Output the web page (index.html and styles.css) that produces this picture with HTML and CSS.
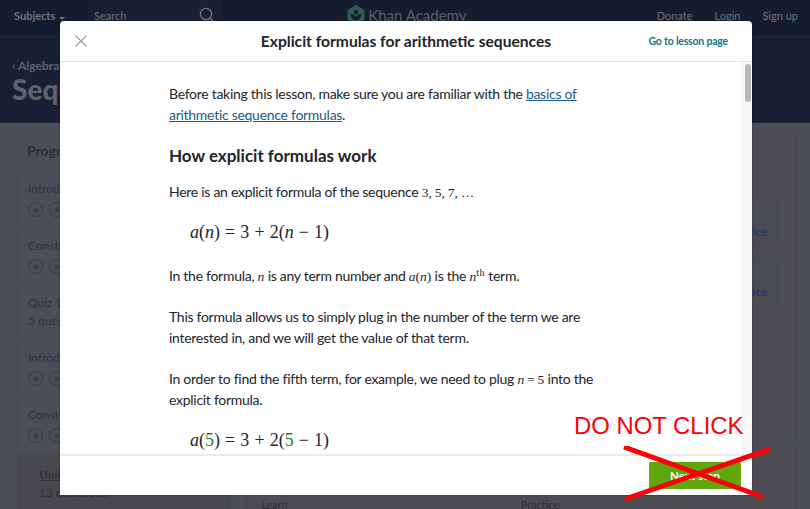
FILE: index.html
```html
<!DOCTYPE html>
<html lang="en">
<head>
    <meta charset="UTF-8">
    <title>Explicit formulas for arithmetic sequences</title>
    <link rel="stylesheet" href="styles.css">
</head>
<body>
<div class="page">
    <header class="topbar">
        <div class="topbar-left">
            <span class="subjects">Subjects <i class="caret"></i></span>
            <div class="search">
                <span>Search</span>
                <svg width="16" height="16" viewBox="0 0 16 16" fill="none" stroke="#6b7280" stroke-width="1.4"><circle cx="7" cy="7" r="5.6"/><path d="M11 11l4 4"/></svg>
            </div>
        </div>
        <div class="logo">
            <svg width="18" height="20" viewBox="0 0 18 20"><path d="M9 0l8.5 5v10L9 20 .5 15V5z" fill="#2f5f4c"/><circle cx="9" cy="7" r="2.2" fill="#141c2f"/><path d="M3.5 9c0 4 2.5 6 5.5 6s5.500-2 5.500-6c-2.500 0-4.500 1-5.500 3-1-2-3-3-5.500-3z" fill="#141c2f"/></svg>
            <span>Khan Academy</span>
        </div>
        <nav class="topbar-right">
            <span>Donate</span>
            <span>Login</span>
            <span>Sign up</span>
        </nav>
    </header>
    <section class="hero">
        <div class="crumb">&lsaquo; Algebra I</div>
        <h1>Sequences</h1>
    </section>
    <main class="content">
        <aside class="sidebar">
            <h3>Progress</h3>
            <div class="lessons">
                <div class="lesson">
                    <div class="lesson-name">Introduction</div>
                    <div class="stars"><i>&#9733;</i><i>&#9733;</i></div>
                </div>
                <div class="lesson">
                    <div class="lesson-name">Constructing</div>
                    <div class="stars"><i>&#9733;</i><i>&#9733;</i></div>
                </div>
                <div class="lesson lesson-quiz">
                    <div class="lesson-name">Quiz 1</div>
                    <div class="lesson-sub">5 questions</div>
                </div>
                <div class="lesson">
                    <div class="lesson-name">Introduction</div>
                    <div class="stars"><i>&#9733;</i><i>&#9733;</i></div>
                </div>
                <div class="lesson">
                    <div class="lesson-name">Constructing</div>
                    <div class="stars"><i>&#9733;</i><i>&#9733;</i></div>
                </div>
                <div class="lesson lesson-test">
                    <div class="lesson-name">Unit test</div>
                    <div class="lesson-sub">13 questions</div>
                </div>
            </div>
        </aside>
        <div class="panels">
            <div class="panel panel-top">
                <div class="practice">Practice</div>
                <div class="practice">Practice</div>
            </div>
            <div class="panel panel-bottom">
                <span>Learn</span>
                <span>Practice</span>
            </div>
        </div>
    </main>
</div>

<div class="modal">
    <div class="modal-head">
        <svg class="close" width="12" height="12" viewBox="0 0 12 12" stroke="#9a9ea3" stroke-width="1.1"><path d="M.5.5l11 11M11.500.5l-11 11"/></svg>
        <h2>Explicit formulas for arithmetic sequences</h2>
        <a class="lesson-link">Go to lesson page</a>
    </div>
    <div class="modal-body">
        <div class="article">
            <p>Before taking this lesson, make sure you are familiar with the <a>basics of arithmetic sequence formulas</a>.</p>
            <h3>How explicit formulas work</h3>
            <p>Here is an explicit formula of the sequence <span class="m">3, 5, 7, &hellip;</span></p>
            <div class="formula"><em>a</em>(<em>n</em>) = 3 + 2(<em>n</em> &minus; 1)</div>
            <p>In the formula, <span class="m"><em>n</em></span> is any term number and <span class="m"><em>a</em>(<em>n</em>)</span> is the <span class="m"><em>n</em><sup>th</sup></span> term.</p>
            <p>This formula allows us to simply plug in the number of the term we are interested in, and we will get the value of that term.</p>
            <p>In order to find the fifth term, for example, we need to plug <span class="m"><em>n</em> = 5</span> into the explicit formula.</p>
            <div class="formula"><em>a</em>(<b>5</b>) = 3 + 2(<b>5</b> &minus; 1)</div>
        </div>
        <div class="scrollbar"><div class="thumb"></div></div>
    </div>
    <div class="modal-foot">
        <button class="next">Next step</button>
    </div>
</div>

<div class="warning">DO NOT CLICK</div>
<svg class="cross" width="150" height="56" viewBox="0 0 150 56" stroke="#fb0007" stroke-width="5"><path d="M1 1l139 50M147 3L2 53"/></svg>
</body>
</html>
```

FILE: styles.css
```css
* {
    box-sizing: border-box;
}
html, body {
    margin: 0;
    height: 100%;
    overflow: hidden;
}
body {
    font-family: Lato, "Open Sans", sans-serif;
    background-color: #4b4e56;
    position: relative;
}
.page {
    width: 810px;
    height: 509px;
    overflow: hidden;
}

/* dimmed page behind the modal */
.topbar {
    height: 37px;
    background-color: #141c2f;
    border-bottom: 1px solid #1f2739;
    display: flex;
    align-items: center;
    justify-content: space-between;
    padding: 0 12px 6px 14px;
    font-size: 11px;
    color: #6f7480;
    font-weight: 700;
}
.topbar-left {
    display: flex;
    align-items: center;
    gap: 14px;
}
.subjects {
    width: 59px;
    white-space: nowrap;
}
.caret {
    display: inline-block;
    margin-left: 1px;
    border-left: 3px solid transparent;
    border-right: 3px solid transparent;
    border-top: 3px solid #6f7480;
}
.search {
    width: 135px;
    height: 30px;
    background-color: #182033;
    display: flex;
    align-items: center;
    justify-content: space-between;
    padding: 0 7px;
    font-weight: 400;
}
.logo {
    display: flex;
    align-items: center;
    gap: 3px;
    margin-left: -65px;
    font-size: 15px;
    font-weight: 400;
    color: #5c616c;
}
.topbar-right {
    display: flex;
    gap: 22px;
    font-weight: 400;
}
.hero {
    height: 86px;
    background-color: #172034;
    padding: 22px 12px 0;
    color: #5d626d;
}
.crumb {
    font-size: 12px;
    font-weight: 700;
    line-height: 14px;
}
.hero h1 {
    margin: 0;
    font-size: 28px;
    line-height: 32px;
    font-weight: 900;
}
.content {
    display: flex;
    padding: 9px 13px 0 17px;
    gap: 14px;
}
.sidebar {
    width: 214px;
    flex: none;
}
.sidebar h3 {
    margin: 0;
    padding: 10px 10px 0;
    height: 38px;
    font-size: 14px;
    line-height: 18px;
    color: #2c2f36;
}
.lessons {
    border: 1px solid #45484f;
    border-bottom: 0;
}
.lesson {
    height: 57px;
    padding: 9px 10px 0;
    border-bottom: 1px solid #45484f;
    font-size: 12px;
    line-height: 18px;
    color: #2f3238;
}
.lesson-quiz {
    height: 55px;
}
.lesson-sub {
    line-height: 17px;
}
.stars {
    display: flex;
    gap: 6px;
    margin-top: 4px;
}
.stars i {
    width: 15px;
    height: 15px;
    border: 1px solid #36393f;
    border-radius: 50%;
    font-style: normal;
    font-size: 9px;
    line-height: 13px;
    text-align: center;
    color: #36393f;
}
.lesson-test {
    background-color: #48494f;
    padding: 11px 0 0 21px;
    height: 60px;
    border-top: 1px solid #45484f;
}
.lesson-test .lesson-name {
    font-weight: 700;
    text-decoration: underline;
}
.panels {
    flex: 1;
}
.panel {
    border: 1px solid #45484f;
    background-color: #4d4d51;
}
.panel-top {
    height: 307px;
    padding: 65px 17px 0 280px;
}
.practice {
    height: 48px;
    margin-bottom: 12px;
    background-color: #4a4c54;
    border: 1px solid #46484f;
    color: #2a3569;
    font-size: 12px;
    font-weight: 700;
    line-height: 66px;
    text-indent: 197px;
    overflow: hidden;
}
.panel-bottom {
    height: 70px;
    margin-top: 9px;
    padding: 49px 0 0 15px;
    display: flex;
    gap: 233px;
    font-size: 11px;
    color: #2c2f36;
}

/* modal */
.modal {
    position: absolute;
    left: 60px;
    top: 21px;
    width: 692px;
    height: 474px;
    background-color: #fff;
    border-radius: 4px 4px 0 0;
    display: flex;
    flex-direction: column;
    box-shadow: 0 0 2px rgba(0,0,0,0.4);
}
.modal-head {
    height: 41px;
    flex: none;
    border-bottom: 1px solid #dfe0e1;
    display: flex;
    align-items: center;
    justify-content: space-between;
    padding: 0 24px 0 15px;
    position: relative;
}
.modal-head h2 {
    position: absolute;
    left: 0;
    right: 0;
    margin: 0;
    text-align: center;
    font-size: 15.600px;
    font-weight: 700;
    color: #21242c;
}
.lesson-link {
    font-size: 10.500px;
    font-weight: 700;
    letter-spacing: -0.2px;
    color: #14718f;
    position: relative;
}
.modal-body {
    flex: 1;
    min-height: 0;
    display: flex;
    overflow: hidden;
}
.article {
    flex: 1;
    padding: 21px 0 0 109px;
    font-size: 14px;
    letter-spacing: -0.28px;
    line-height: 21px;
    color: #21242c;
}
.article p {
    width: 430px;
    margin: 0 0 20px;
}
.article a {
    color: #1c5b8a;
    text-decoration: underline;
}
.article h3 {
    margin: -1px 0 13px;
    font-size: 17px;
    letter-spacing: 0;
    line-height: 24px;
    font-weight: 700;
}
.m {
    font-family: "Liberation Serif", serif;
    font-size: 13.500px;
    line-height: 0;
    letter-spacing: 0;
    word-spacing: -0.5px;
}
.m sup {
    font-size: 10px;
    line-height: 0;
    letter-spacing: 0.5px;
}
.formula {
    font-family: "Liberation Serif", serif;
    font-size: 18px;
    letter-spacing: 0;
    word-spacing: 0.6px;
    line-height: 21px;
    margin: 0 0 22px 21px;
}
.formula b {
    font-weight: 400;
    color: #1f7f1f;
}
.scrollbar {
    width: 10px;
    flex: none;
    background-color: #fafafa;
    border-left: 1px solid #ececec;
    padding: 2px 1px 0 2px;
}
.thumb {
    height: 38px;
    background-color: #b8b8b8;
    border-radius: 3px;
}
.modal-foot {
    height: 41px;
    flex: none;
    border-top: 2px solid #ebebeb;
    display: flex;
    justify-content: flex-end;
    align-items: center;
    padding: 0 11px 0 0;
}
.next {
    width: 92px;
    height: 27px;
    border: 0;
    border-radius: 2px;
    background-color: #60a60c;
    color: #fff;
    font-family: Lato, sans-serif;
    font-size: 11.500px;
    font-weight: 700;
}

/* red marks drawn over the screenshot */
.warning {
    position: absolute;
    left: 574px;
    top: 411px;
    font-family: "Liberation Sans", Arial, sans-serif;
    font-size: 23.900px;
    line-height: 29px;
    color: #fb0007;
    white-space: nowrap;
}
.cross {
    position: absolute;
    left: 623px;
    top: 446px;
}
```
